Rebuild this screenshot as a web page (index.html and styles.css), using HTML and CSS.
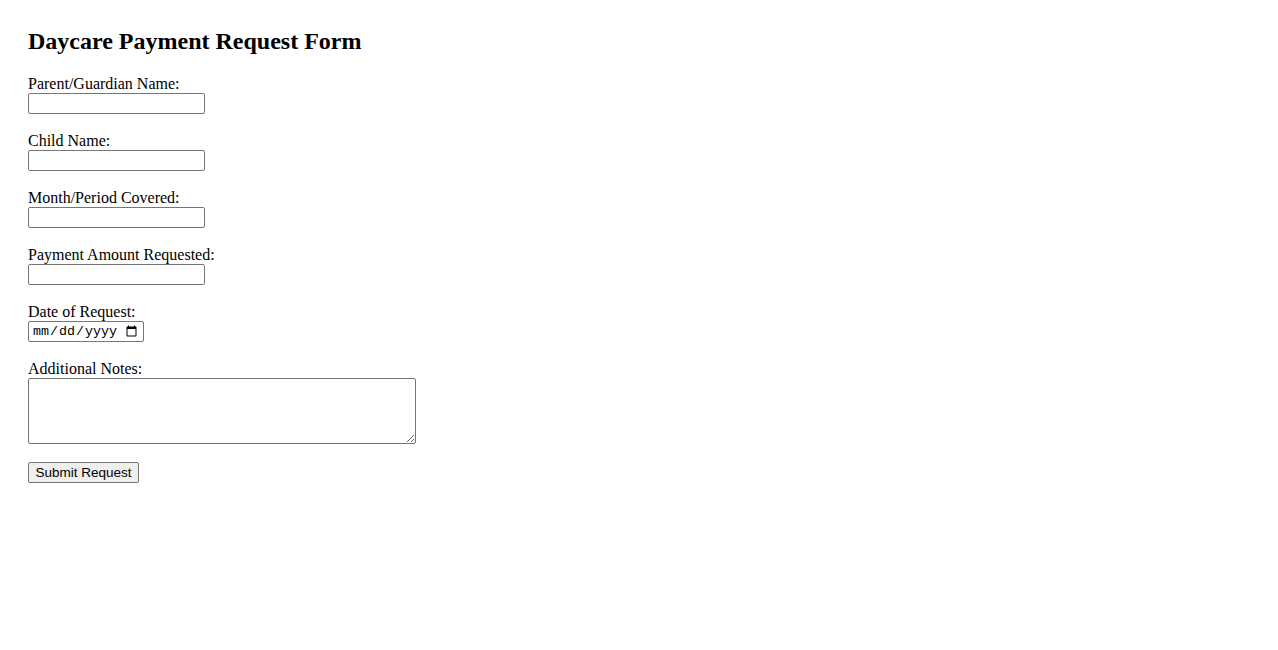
FILE: index.html
```html
<!DOCTYPE html>
<html lang="en">
<head>
    <meta charset="UTF-8">
    <meta name="viewport" content="width=device-width, initial-scale=1.0">
    <title>Daycare Payment Request Form</title>
    <link rel="stylesheet" href="styles.css">
</head>
<body>
    <div class="container">
        <h2 class="title">Daycare Payment Request Form</h2>

        <form class="request-form">
            <div class="field">
                <label for="parentName">Parent/Guardian Name:</label>
                <input type="text" id="parentName" name="parentName">
            </div>

            <div class="field">
                <label for="childName">Child Name:</label>
                <input type="text" id="childName" name="childName">
            </div>

            <div class="field">
                <label for="period">Month/Period Covered:</label>
                <input type="text" id="period" name="period">
            </div>

            <div class="field">
                <label for="amount">Payment Amount Requested:</label>
                <input type="text" id="amount" name="amount">
            </div>

            <div class="field">
                <label for="requestDate">Date of Request:</label>
                <input type="date" id="requestDate" name="requestDate" class="date-input">
            </div>

            <div class="field">
                <label for="notes">Additional Notes:</label>
                <textarea id="notes" name="notes"></textarea>
            </div>

            <button type="submit" class="submit-btn">Submit Request</button>
        </form>
    </div>
</body>
</html>
```

FILE: styles.css
```css
body {
    font-family: "Liberation Serif", "Times New Roman", serif;
    font-size: 16px;
    color: #000;
    background: #fff;
    margin: 8px;
}

.container {
    padding: 20px;
}

.title {
    font-size: 24px;
    font-weight: bold;
    margin: 0 0 20px;
}

.field {
    margin-bottom: 18px;
}

.field label {
    display: block;
}

.field input,
.field textarea {
    display: block;
    box-sizing: border-box;
    margin: 0;
    border: 1px solid #767676;
    border-radius: 2px;
    background: #fff;
}

.field input[type="text"] {
    width: 177px;
    height: 21px;
    padding: 1px 2px;
    font-family: "Liberation Sans", Arial, sans-serif;
    font-size: 13.33px;
}

.date-input {
    width: 116px;
    height: 21px;
    padding: 1px 3px;
    font-family: "Liberation Mono", "Courier New", monospace;
    font-size: 13.33px;
}

.field textarea {
    width: 388px;
    height: 66px;
    padding: 2px;
    font-family: "Liberation Mono", "Courier New", monospace;
    font-size: 13.33px;
}

.submit-btn {
    display: block;
    box-sizing: border-box;
    width: 111px;
    height: 21px;
    margin: 0;
    padding: 1px 6px;
    font-family: "Liberation Sans", Arial, sans-serif;
    font-size: 13.5px;
    color: #000;
    background: #efefef;
    border: 1px solid #767676;
    border-radius: 2px;
}
```
